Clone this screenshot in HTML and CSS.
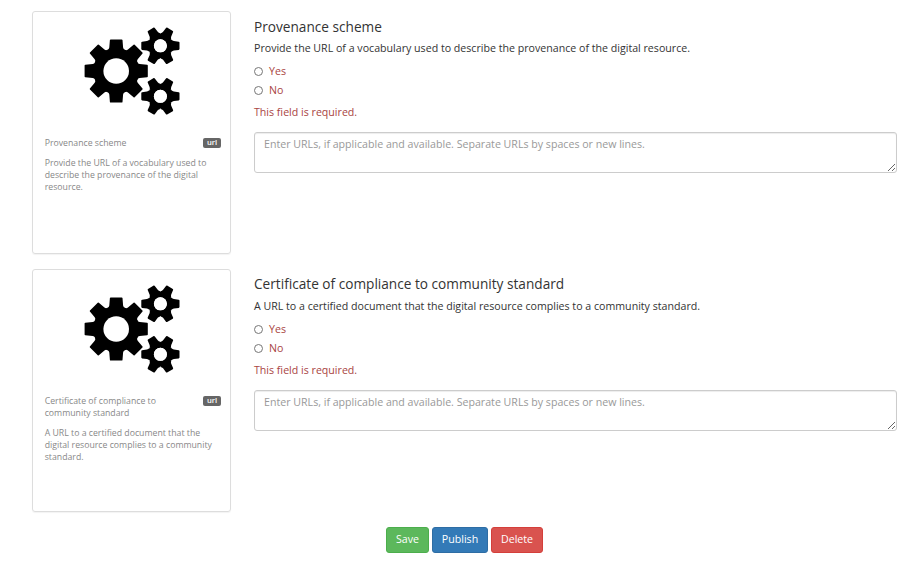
FILE: index.html
```
<!DOCTYPE html>
<html lang="en">
<head>
<meta charset="utf-8">
<title>Assessment</title>
<link rel="stylesheet" href="styles.css">
</head>
<body>
<svg class="defs" width="0" height="0" aria-hidden="true">
  <defs>
    <path id="tooth-l" d="M-5.5-31.6H5.5Q6.2-31.6 6.3-30.9L6.9-23.5Q7.1-21.8 8.9-21L0-12L-8.9-21Q-7.1-21.8-6.9-23.5L-6.3-30.9Q-6.2-31.6-5.5-31.6Z"/>
    <path id="tooth-s" d="M-3.3-19.1H3.3Q4-19 4.1-18.3L4.7-13.5Q4.9-12 6.2-11L0-8L-6.2-11Q-4.9-12-4.7-13.5L-4.1-18.3Q-4-19-3.3-19.1Z"/>
    <g id="gear-s">
      <circle r="9.4" fill="none" stroke="#000" stroke-width="5.8"/>
      <use href="#tooth-s" transform="rotate(30)"/><use href="#tooth-s" transform="rotate(90)"/><use href="#tooth-s" transform="rotate(150)"/>
      <use href="#tooth-s" transform="rotate(210)"/><use href="#tooth-s" transform="rotate(270)"/><use href="#tooth-s" transform="rotate(330)"/>
      <circle r="6.5" fill="#fff"/>
    </g>
    <g id="gears">
      <g transform="translate(32.2 44)">
        <circle r="22.8"/>
        <use href="#tooth-l"/><use href="#tooth-l" transform="rotate(45)"/><use href="#tooth-l" transform="rotate(90)"/><use href="#tooth-l" transform="rotate(135)"/>
        <use href="#tooth-l" transform="rotate(180)"/><use href="#tooth-l" transform="rotate(225)"/><use href="#tooth-l" transform="rotate(270)"/><use href="#tooth-l" transform="rotate(315)"/>
        <circle r="12.8" fill="#fff"/>
      </g>
      <use href="#gear-s" transform="translate(76.4 18.8)"/>
      <use href="#gear-s" transform="translate(76.4 69.3)"/>
    </g>
  </defs>
</svg>
<form class="page">
  <section class="row">
    <div class="card">
      <svg class="icon" viewBox="0 0 96 88"><use href="#gears"/></svg>
      <div class="caption">
        <div class="head"><span>Provenance scheme</span><span class="label">url</span></div>
        <p>Provide the URL of a vocabulary used to describe the provenance of the digital resource.</p>
      </div>
    </div>
    <div class="question">
      <h4>Provenance scheme</h4>
      <p class="desc">Provide the URL of a vocabulary used to describe the provenance of the digital resource.</p>
      <label class="radio"><input type="radio" name="a"><span>Yes</span></label>
      <label class="radio"><input type="radio" name="a"><span>No</span></label>
      <p class="error">This field is required.</p>
      <textarea placeholder="Enter URLs, if applicable and available. Separate URLs by spaces or new lines."></textarea>
    </div>
  </section>
  <section class="row">
    <div class="card">
      <svg class="icon" viewBox="0 0 96 88"><use href="#gears"/></svg>
      <div class="caption">
        <div class="head"><span>Certificate of compliance to community standard</span><span class="label">url</span></div>
        <p>A URL to a certified document that the digital resource complies to a community standard.</p>
      </div>
    </div>
    <div class="question">
      <h4>Certificate of compliance to community standard</h4>
      <p class="desc">A URL to a certified document that the digital resource complies to a community standard.</p>
      <label class="radio"><input type="radio" name="b"><span>Yes</span></label>
      <label class="radio"><input type="radio" name="b"><span>No</span></label>
      <p class="error">This field is required.</p>
      <textarea placeholder="Enter URLs, if applicable and available. Separate URLs by spaces or new lines."></textarea>
    </div>
  </section>
  <div class="actions">
    <button type="button" class="btn save">Save</button>
    <button type="button" class="btn publish">Publish</button>
    <button type="button" class="btn delete">Delete</button>
  </div>
</form>
</body>
</html>
```
FILE: styles.css
```
* { box-sizing: border-box; }
body {
  margin: 0;
  background: #fff;
  color: #333;
  font: 10.63px/15px "Open Sans", "Noto Sans", sans-serif;
}
p, h4 { margin: 0; }
.defs { display: block; }
.page { padding: 11px 20px 0 32px; }
.row { display: flex; gap: 23px; margin-bottom: 14.7px; }
.card {
  width: 199px;
  height: 243px;
  flex: none;
  border: 1px solid #ddd;
  border-radius: 3px;
  box-shadow: 0 1px 1px rgba(0, 0, 0, .05);
}
.icon { display: block; width: 96px; height: 88px; margin: 15px 0 0 51px; }
.caption {
  padding: 22px 9px 0 11.7px;
  color: #888;
  font-size: 8.72px;
  line-height: 12px;
}
.head { display: flex; justify-content: space-between; align-items: flex-start; margin-bottom: 8px; }
.head span:first-child { max-width: 125px; }
.label {
  width: 18px;
  margin-top: 1px;
  height: 10px;
  border-radius: 2px;
  background: #666;
  color: #fff;
  font-size: 7.6px;
  line-height: 9px;
  font-weight: 600;
  text-align: center;
}
.question { flex: 1; padding-top: 6.6px; }
h4 { font-size: 13.65px; line-height: 17px; font-weight: 400; }
.desc { margin: 6.4px 0 8px; }
.radio { display: flex; align-items: center; height: 15px; margin-bottom: 4px; color: #a94442; }
.radio input {
  appearance: none;
  width: 9px;
  height: 9px;
  margin: 1px 6px 0 0;
  border: 1px solid #767676;
  border-radius: 50%;
  background: #fff;
}
.error { margin: 7px 0 12px; color: #a94442; }
textarea {
  display: block;
  width: 100%;
  height: 41px;
  padding: 4px 9px;
  border: 1px solid #ccc;
  border-radius: 3px;
  box-shadow: inset 0 1px 1px rgba(0, 0, 0, .075);
  font: inherit;
  color: #555;
  resize: vertical;
}
textarea::placeholder { color: #999; }
.actions { display: flex; justify-content: center; gap: 3px; padding-top: .6px; }
.btn {
  height: 26px;
  padding: 0;
  border: 1px solid;
  border-radius: 3px;
  color: #fff;
  font: inherit;
}
.save { width: 43px; background: #5cb85c; border-color: #4cae4c; }
.publish { width: 56px; background: #337ab7; border-color: #2e6da4; }
.delete { width: 52px; background: #d9534f; border-color: #d43f3a; }
```
